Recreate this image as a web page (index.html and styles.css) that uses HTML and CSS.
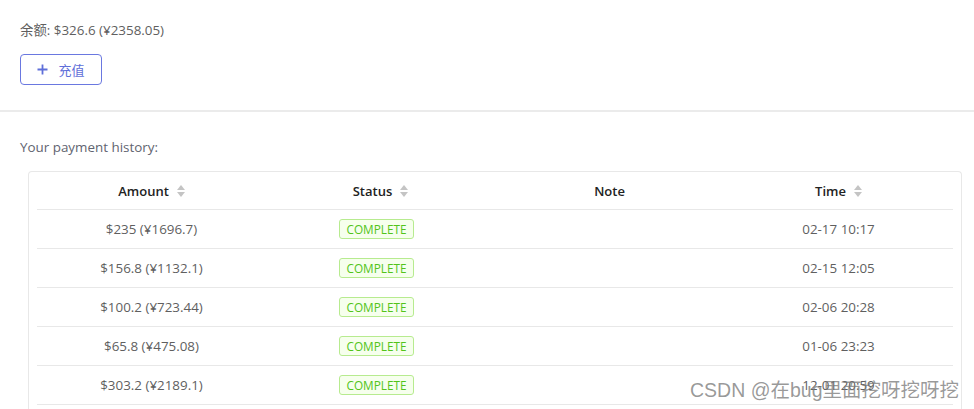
FILE: index.html
```html
<!DOCTYPE html>
<html>
<head>
<meta charset="utf-8">
<link rel="stylesheet" href="styles.css">
</head>
<body>
<div class="top">
  <div class="balance">余额: $326.6 (¥2358.05)</div>
  <button class="recharge"><svg class="plus" width="11" height="11" viewBox="0 0 11 11"><path d="M5.5 0.5v10M0.5 5.5h10" stroke="currentColor" stroke-width="1.8"/></svg><span>充值</span></button>
</div>
<div class="divider"></div>
<div class="history">
  <div class="label">Your payment history:</div>
  <div class="card">
    <table class="table">
      <thead>
        <tr>
          <th><span class="th">Amount<span class="sort"><i class="up"></i><i class="down"></i></span></span></th>
          <th><span class="th">Status<span class="sort"><i class="up"></i><i class="down"></i></span></span></th>
          <th><span class="th">Note</span></th>
          <th><span class="th">Time<span class="sort"><i class="up"></i><i class="down"></i></span></span></th>
        </tr>
      </thead>
      <tbody>
        <tr><td>$235 (¥1696.7)</td><td><span class="tag">COMPLETE</span></td><td></td><td>02-17 10:17</td></tr>
        <tr><td>$156.8 (¥1132.1)</td><td><span class="tag">COMPLETE</span></td><td></td><td>02-15 12:05</td></tr>
        <tr><td>$100.2 (¥723.44)</td><td><span class="tag">COMPLETE</span></td><td></td><td>02-06 20:28</td></tr>
        <tr><td>$65.8 (¥475.08)</td><td><span class="tag">COMPLETE</span></td><td></td><td>01-06 23:23</td></tr>
        <tr><td>$303.2 (¥2189.1)</td><td><span class="tag">COMPLETE</span></td><td></td><td>12-01 20:59</td></tr>
      </tbody>
    </table>
  </div>
</div>
<div class="watermark">CSDN @在bug里面挖呀挖呀挖</div>
</body>
</html>
```
FILE: styles.css
```css
html, body {
  margin: 0;
  padding: 0;
  background: #fff;
  font-family: "Open Sans", "Noto Sans CJK SC", sans-serif;
  font-size: 13.4px;
  color: #606266;
  overflow: hidden;
  height: 409px;
}
.top {
  padding: 20px 20px 25px 20px;
}
.balance {
  line-height: 20px;
  color: #5f5f5f;
}
.recharge {
  margin-top: 14px;
  width: 82px;
  height: 31px;
  border: 1px solid #6a78e0;
  border-radius: 4px;
  background: #fff;
  color: #5f6fd9;
  font-family: "Open Sans", "Noto Sans CJK SC", sans-serif;
  font-size: 13px;
  display: flex;
  align-items: center;
  justify-content: center;
  gap: 10px;
  padding: 0;
}
.plus { display: block; }
.divider {
  height: 2px;
  background: #ebebeb;
}
.history {
  padding: 25px 12px 0 20px;
}
.label {
  line-height: 20px;
  color: #5f6470;
}
.card {
  margin: 14px 0 0 8px;
  border: 1px solid #e8e8e8;
  border-bottom: 0;
  border-radius: 4px 4px 0 0;
  padding: 0 8px 20px;
}
.table {
  width: 100%;
  border-collapse: collapse;
  table-layout: fixed;
}
.table th {
  height: 37px;
  font-weight: 600;
  color: #222;
  font-size: 13px;
  border-bottom: 1px solid #e8e8e8;
  padding: 0;
  text-align: center;
}
.th {
  display: inline-flex;
  align-items: center;
  gap: 8px;
}
.sort {
  display: inline-flex;
  flex-direction: column;
  gap: 2px;
}
.sort i {
  display: block;
  width: 0;
  height: 0;
  border-left: 4px solid transparent;
  border-right: 4px solid transparent;
}
.sort .up { border-bottom: 5px solid #c4c4c4; }
.sort .down { border-top: 5px solid #c4c4c4; }
.table td {
  height: 38px;
  text-align: center;
  border-bottom: 1px solid #e8e8e8;
  padding: 0;
  color: #5f5f5f;
}
.tag {
  display: inline-block;
  height: 18px;
  line-height: 18px;
  padding: 0 6px;
  margin-right: 8px;
  border: 1px solid #b7eb8f;
  background: #f6ffed;
  color: #52c41a;
  border-radius: 3px;
  font-size: 11.8px;
}
.watermark {
  position: absolute;
  left: 690px;
  top: 374px;
  font-family: "Liberation Sans", "Noto Sans CJK SC", sans-serif;
  font-size: 19.5px;
  color: rgba(120, 120, 120, 0.75);
  white-space: nowrap;
}
```
